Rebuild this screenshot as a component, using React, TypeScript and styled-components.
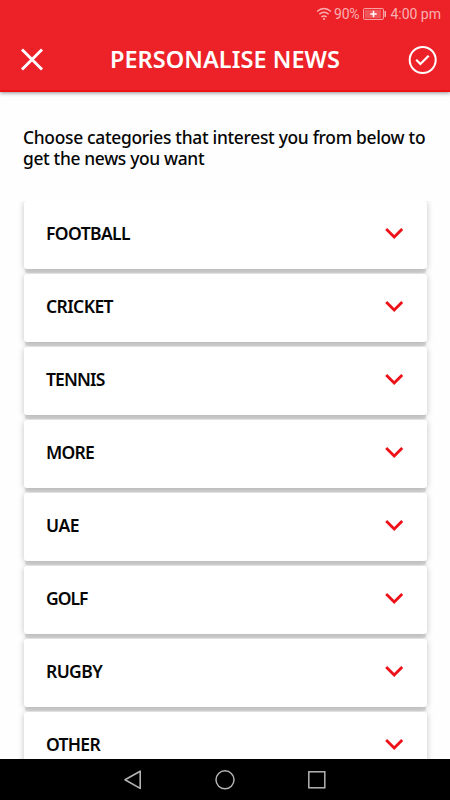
import React from "react";
import styled, { createGlobalStyle } from "styled-components";

const GlobalStyle = createGlobalStyle`
  * { box-sizing: border-box; }
  body { margin: 0; background: #fff; overflow: hidden; }
  svg { display: block; flex: none; }
`;

const Screen = styled.div`
  width: 450px;
  height: 800px;
  display: flex;
  flex-direction: column;
  overflow: hidden;
  background: #fefefe;
  color: #050505;
  font-family: "Noto Sans", "Open Sans", sans-serif;
`;

const Header = styled.header`
  height: 92px;
  flex: none;
  background: #ed2228;
  border-bottom: 2px solid #f01118;
  box-shadow: 0 1px 4px rgba(0, 0, 0, 0.45);
  color: #fff;
`;

const StatusBar = styled.div`
  height: 28px;
  display: flex;
  align-items: center;
  padding: 0 9px 0 316px;
  color: #f9b0b2;
  font: 14px/28px Roboto, sans-serif;
`;

const Battery = styled.span`
  width: 26px;
  letter-spacing: -0.2px;
  margin-left: 2px;
  margin-right: 3px;
`;

const Clock = styled.span`
  margin-left: auto;
  white-space: nowrap;
`;

const TitleBar = styled.div`
  height: 62px;
  display: grid;
  grid-template-columns: 64px 1fr 55px;
  align-items: center;
`;

const Title = styled.h1`
  margin: 0;
  padding-right: 9px;
  text-align: center;
  white-space: nowrap;
  font-size: 23.5px;
  line-height: 32px;
  font-weight: 600;
  letter-spacing: 0.05px;
`;

const IconButton = styled.button`
  width: 100%;
  height: 62px;
  padding: 0;
  border: 0;
  display: grid;
  place-items: center;
  background: transparent;
  color: inherit;
`;

const Intro = styled.p`
  height: 109px;
  flex: none;
  margin: 0;
  padding: 35px 0 0 23px;
  font-size: 17.4px;
  line-height: 21px;
  font-weight: 500;
`;

const IntroLine = styled.span<{ $spacing: number }>`
  display: block;
  white-space: nowrap;
  letter-spacing: ${(p) => p.$spacing}px;
`;

const List = styled.main`
  flex: 1;
  min-height: 0;
  overflow: hidden;
  padding: 0 23px 0 24px;
  display: flex;
  flex-direction: column;
  gap: 5px;
`;

const Card = styled.section`
  height: 68px;
  flex: none;
  display: flex;
  align-items: center;
  justify-content: space-between;
  padding: 0 23px 4px 22px;
  background: #fff;
  border-radius: 3px;
  box-shadow: 0 5px 1px -1px rgba(0, 0, 0, 0.12), 0 1px 6px rgba(0, 0, 0, 0.24);
`;

const Label = styled.span<{ $spacing: number }>`
  font-size: 17.5px;
  line-height: 24px;
  font-weight: 600;
  white-space: nowrap;
  letter-spacing: ${(p) => p.$spacing}px;
`;

const NavBar = styled.nav`
  height: 41px;
  flex: none;
  display: flex;
  justify-content: center;
  align-items: center;
  gap: 72px;
  background: #000;
`;

const categories = [
  { name: "FOOTBALL", spacing: -0.6 },
  { name: "CRICKET", spacing: -0.6 },
  { name: "TENNIS", spacing: -0.85 },
  { name: "MORE", spacing: -0.75 },
  { name: "UAE", spacing: -0.5 },
  { name: "GOLF", spacing: -1 },
  { name: "RUGBY", spacing: -0.6 },
  { name: "OTHER", spacing: -0.7 },
];

const WifiIcon = () => (
  <svg width="16" height="14" viewBox="0 0 16 14" fill="none" stroke="currentColor" strokeWidth="1.4">
    <path d="M1 4.5Q8-1.5 15 4.5M3.3 7.3Q8 3.2 12.7 7.3M5.4 10Q8 7.8 10.6 10" />
    <circle cx="8" cy="12" r="1.1" fill="currentColor" stroke="none" />
  </svg>
);

const BatteryIcon = () => (
  <svg width="24" height="12" viewBox="0 0 24 12">
    <rect x=".6" y=".6" width="19.8" height="10.8" rx=".8" fill="none" stroke="currentColor" strokeWidth="1" />
    <path d="M2 2h16v8H2z" fill="#f0555a" />
    <path d="M21.5 3h1.5v6h-1.5z" fill="currentColor" />
    <path d="M10.5 2.8v6.4M7.3 6h6.4" stroke="#fff" strokeWidth="1.6" />
  </svg>
);

const Chevron = () => (
  <svg width="19" height="14" viewBox="0 0 19 14" fill="none" stroke="#ee1118" strokeWidth="2.8">
    <path d="M1.2 3L9.2 11L17.2 3" />
  </svg>
);

export default function App() {
  return (
    <Screen>
      <GlobalStyle />
      <Header>
        <StatusBar>
          <WifiIcon />
          <Battery>90%</Battery>
          <BatteryIcon />
          <Clock>4:00 pm</Clock>
        </StatusBar>
        <TitleBar>
          <IconButton aria-label="Close">
            <svg width="24" height="24" viewBox="0 0 24 24" stroke="currentColor" strokeWidth="2.9">
              <path d="M2 2.5L22 22.5M22 2.5L2 22.5" />
            </svg>
          </IconButton>
          <Title>PERSONALISE NEWS</Title>
          <IconButton aria-label="Confirm">
            <svg width="30" height="30" viewBox="0 0 30 30" fill="none" stroke="currentColor" strokeWidth="2">
              <circle cx="14.7" cy="16" r="13" />
              <path d="M8.2 15.8L12.4 20L20.7 11.8" strokeWidth="2.2" />
            </svg>
          </IconButton>
        </TitleBar>
      </Header>
      <Intro>
        <IntroLine $spacing={-0.3}>Choose categories that interest you from below to</IntroLine>
        <IntroLine $spacing={-0.34}>get the news you want</IntroLine>
      </Intro>
      <List>
        {categories.map((c) => (
          <Card key={c.name}>
            <Label $spacing={c.spacing}>{c.name}</Label>
            <Chevron />
          </Card>
        ))}
      </List>
      <NavBar>
        <svg width="20" height="20" viewBox="0 0 20 20" fill="none" stroke="#b4b4b4" strokeWidth="1.6" strokeLinejoin="round">
          <path d="M17.2 1.2V18.4L2 9.8Z" />
        </svg>
        <svg width="20" height="20" viewBox="0 0 20 20" fill="none" stroke="#b4b4b4" strokeWidth="1.5">
          <circle cx="10" cy="9.8" r="9" />
        </svg>
        <svg width="20" height="20" viewBox="0 0 20 20" fill="none" stroke="#b4b4b4" strokeWidth="1.5">
          <rect x="1.8" y="1.8" width="16" height="16" />
        </svg>
      </NavBar>
    </Screen>
  );
}
